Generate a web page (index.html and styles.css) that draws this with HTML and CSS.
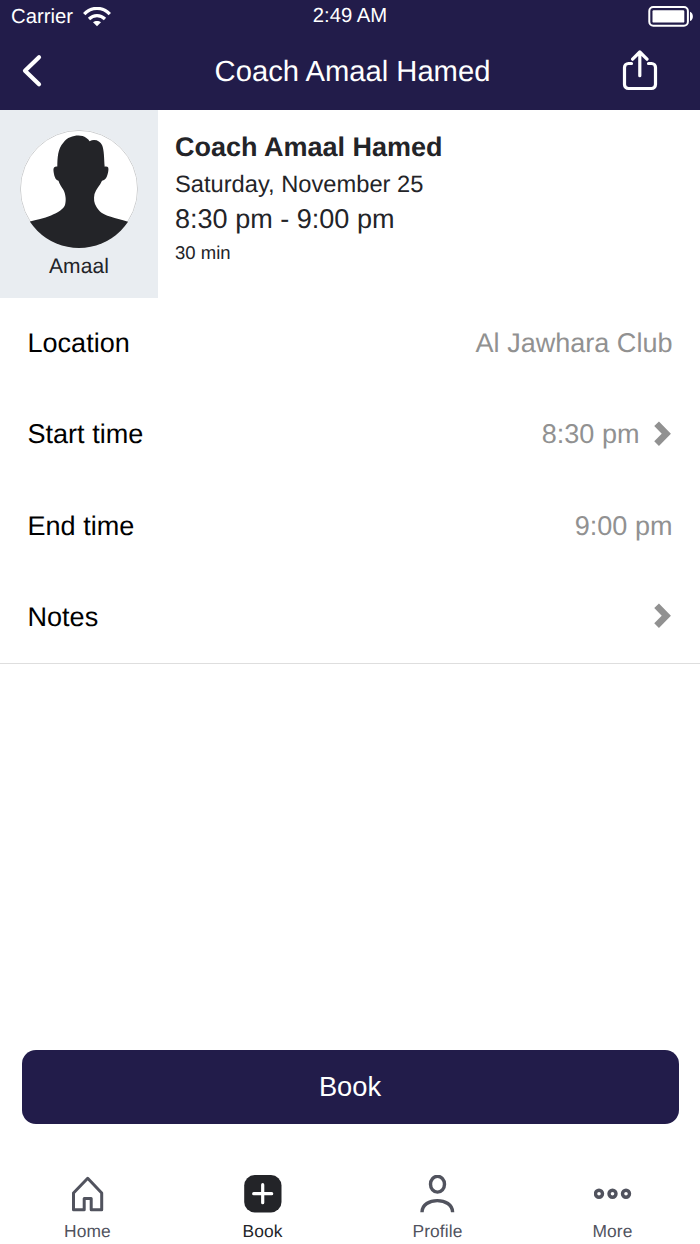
FILE: index.html
```html
<!DOCTYPE html>
<html lang="en">
<head>
<meta charset="utf-8">
<title>Coach Amaal Hamed</title>
<link rel="stylesheet" href="styles.css">
</head>
<body>
<div class="screen">
  <header class="header">
    <div class="status">
      <div class="carrier">
        <span>Carrier</span>
        <svg class="wifi" width="28" height="20" viewBox="0 0 28 20" fill="none" stroke="#fff">
          <path d="M1.2 7.2C8.3-.6 19.7-.6 26.8 7.200" stroke-width="3.2"/>
          <path d="M6 12c4.600-4.500 11.400-4.500 16 0" stroke-width="3.2"/>
          <path d="M14 19.300l-4-4c2.200-1.800 5.800-1.800 8 0z" fill="#fff" stroke="none"/>
        </svg>
      </div>
      <div class="clock">2:49 AM</div>
      <svg class="battery" width="46" height="22" viewBox="0 0 46 22">
        <rect x="1.300" y="1" width="38.600" height="18.800" rx="4" fill="none" stroke="#fff" stroke-width="2"/>
        <rect x="4.500" y="4.200" width="31.800" height="12.400" rx="1.200" fill="#fff"/>
        <path d="M42 5.700c3.800 1.400 3.800 8 0 9.400z" fill="#fff"/>
      </svg>
    </div>
    <nav class="navbar">
      <svg class="back" width="22" height="34" viewBox="0 0 22 34" fill="none" stroke="#fff" stroke-width="4.200" stroke-linecap="round" stroke-linejoin="round">
        <path d="M18 3.300L4 16.800l14 13.500"/>
      </svg>
      <h1 class="title">Coach Amaal Hamed</h1>
      <svg class="share" width="36" height="42" viewBox="0 0 36 42" fill="none" stroke="#fff" stroke-width="3.200" stroke-linecap="round" stroke-linejoin="round">
        <path d="M9.500 13.500H6.500a4 4 0 0 0-4 4v17a4 4 0 0 0 4 4h23a4 4 0 0 0 4-4v-17a4 4 0 0 0-4-4h-3"/>
        <path d="M17.800 25.700V2.500M10.600 9.200L17.800 2l7.200 7.200"/>
      </svg>
    </nav>
  </header>

  <section class="summary">
    <div class="coach">
      <svg class="avatar" width="118" height="118" viewBox="0 0 118 118">
        <defs><clipPath id="round"><circle cx="59" cy="59" r="59"/></clipPath></defs>
        <g clip-path="url(#round)">
          <rect width="118" height="118" fill="#fff"/>
          <circle cx="59" cy="59" r="58.600" fill="none" stroke="#bfc1c4" stroke-width=".8"/>
          <path fill="#232428" d="M37.300 36.500C37.500 28 37.500 19 43.500 12.500C49 5 61 4 66 7.700C68 9 69 10 69.500 11.200C75 8.500 80 11 82 15C84.300 20 84 29 84.700 36.700C88 36.200 88.900 37.500 88.300 41C87.500 45.500 86.500 50 82 50.700C80 55.500 76 59 74.500 64C73.500 69 74 73 76.500 77C79 81.500 83 84.500 90 86.500C96 88.500 103 90 108 91.700L118 118H0L10 91.500C16 90 24 88.500 31 85.500C38 82.500 43.500 79 45 75C46.500 70 45.500 64 43.500 60C41.500 56.500 39.500 54.500 38.500 50.700C35 50 34 45 33.500 41C33 37.500 34.500 36.300 37.300 36.500Z"/>
        </g>
      </svg>
      <div class="coach-name">Amaal</div>
    </div>
    <div class="details">
      <h2 class="name">Coach Amaal Hamed</h2>
      <div class="date">Saturday, November 25</div>
      <div class="time">8:30 pm - 9:00 pm</div>
      <div class="duration">30 min</div>
    </div>
  </section>

  <section class="rows">
    <div class="row"><span>Location</span><span class="value">Al Jawhara Club</span></div>
    <div class="row"><span>Start time</span><span class="value">8:30 pm
      <svg class="chevron" width="20" height="26" viewBox="0 0 20 26" fill="none" stroke="#919191" stroke-width="6.600"><path d="M2.600 2.800L12.300 12.700 2.600 22.600"/></svg></span></div>
    <div class="row"><span>End time</span><span class="value">9:00 pm</span></div>
    <div class="row"><span>Notes</span><span class="value">
      <svg class="chevron" width="20" height="26" viewBox="0 0 20 26" fill="none" stroke="#919191" stroke-width="6.600"><path d="M2.600 2.800L12.300 12.700 2.600 22.600"/></svg></span></div>
  </section>

  <button class="book">Book</button>

  <footer class="tabs">
    <div class="tab">
      <svg width="38" height="38" viewBox="0 0 38 38" fill="none" stroke="#51535e" stroke-width="3" stroke-linejoin="round"><path d="M4.500 18L18.700 3.300l14 14.700v16.700H22.200V23.500h-7v11.200H4.500z"/></svg>
      <span>Home</span>
    </div>
    <div class="tab active">
      <svg width="38" height="38" viewBox="0 0 38 38"><rect x=".2" y=".1" width="37.300" height="37.300" rx="10.500" fill="#232428"/><path d="M18.700 9.700v18M9.700 18.700h18" stroke="#fff" stroke-width="3.200" stroke-linecap="round"/></svg>
      <span>Book</span>
    </div>
    <div class="tab">
      <svg width="38" height="38" viewBox="0 0 38 38" fill="none" stroke="#51535e" stroke-width="3.400"><ellipse cx="18.500" cy="9.200" rx="7" ry="7.900"/><path d="M3 37.200C3 21.700 33.600 21.700 33.600 37.200"/></svg>
      <span>Profile</span>
    </div>
    <div class="tab">
      <svg width="38" height="38" viewBox="0 0 38 38" fill="none" stroke="#51535e" stroke-width="3.400"><circle cx="5" cy="18.700" r="3.500"/><circle cx="18.500" cy="18.700" r="3.500"/><circle cx="32" cy="18.700" r="3.500"/></svg>
      <span>More</span>
    </div>
  </footer>
</div>
</body>
</html>
```

FILE: styles.css
```css
* { box-sizing: border-box; }
body {
  margin: 0;
  background: #fff;
  color: #232428;
  font-family: "Liberation Sans", Arial, sans-serif;
  text-rendering: geometricPrecision;
}
svg { display: block; flex: none; }
h1, h2 { margin: 0; }
.screen {
  width: 700px;
  height: 1244px;
  display: flex;
  flex-direction: column;
}
.header {
  height: 110px;
  background: #221c4a;
  color: #fff;
}
.status {
  height: 32px;
  padding: 1px 6px 0 11px;
  display: grid;
  grid-template-columns: 1fr auto 1fr;
  align-items: center;
  font-size: 20.300px;
}
.carrier { display: flex; align-items: center; gap: 10px; }
.carrier span { padding-top: 1px; }
.clock { margin-right: 5px; }
.battery { justify-self: end; }
.navbar {
  height: 78px;
  padding: 0 42px 0 21px;
  display: grid;
  grid-template-columns: 1fr auto 1fr;
  align-items: center;
}
.title { font-size: 29.200px; font-weight: 400; margin-left: 26px; padding-top: 2px; }
.share { justify-self: end; }
.summary { display: flex; height: 188px; }
.coach {
  width: 158px;
  padding-top: 20px;
  background: #e9edf1;
  display: flex;
  flex-direction: column;
  align-items: center;
}
.coach-name {
  margin-top: 7px;
  font-size: 21px;
  line-height: 24px;
  letter-spacing: .1px;
}
.details { padding: 20px 0 0 17px; }
.name { font-size: 27px; line-height: 34px; }
.date { font-size: 23.700px; line-height: 40px; padding-top: 1px; }
.time { font-size: 27.050px; line-height: 29px; }
.duration { font-size: 18.500px; line-height: 35px; padding-top: 1px; }
.rows {
  height: 366px;
  border-bottom: 1px solid #dedede;
}
.row {
  height: 91.250px;
  padding: 0 27.500px;
  display: flex;
  justify-content: space-between;
  align-items: center;
  color: #000;
  font-size: 27.050px;
}
.value { display: flex; align-items: center; gap: 14px; color: #919191; }
.chevron { margin: 0 -1px 2px 0; }
.book {
  height: 74px;
  margin: 386.400px 21.500px 0;
  border: 0;
  border-radius: 14px;
  background: #221c4a;
  color: #fff;
  font: 27.300px "Liberation Sans", Arial, sans-serif;
}
.tabs {
  margin-top: 50.600px;
  display: grid;
  grid-template-columns: repeat(4, 1fr);
}
.tab {
  display: flex;
  flex-direction: column;
  align-items: center;
  gap: 8px;
  color: #51535e;
  font-size: 17.400px;
  line-height: 20px;
  letter-spacing: .1px;
}
.active { color: #232428; }
```
